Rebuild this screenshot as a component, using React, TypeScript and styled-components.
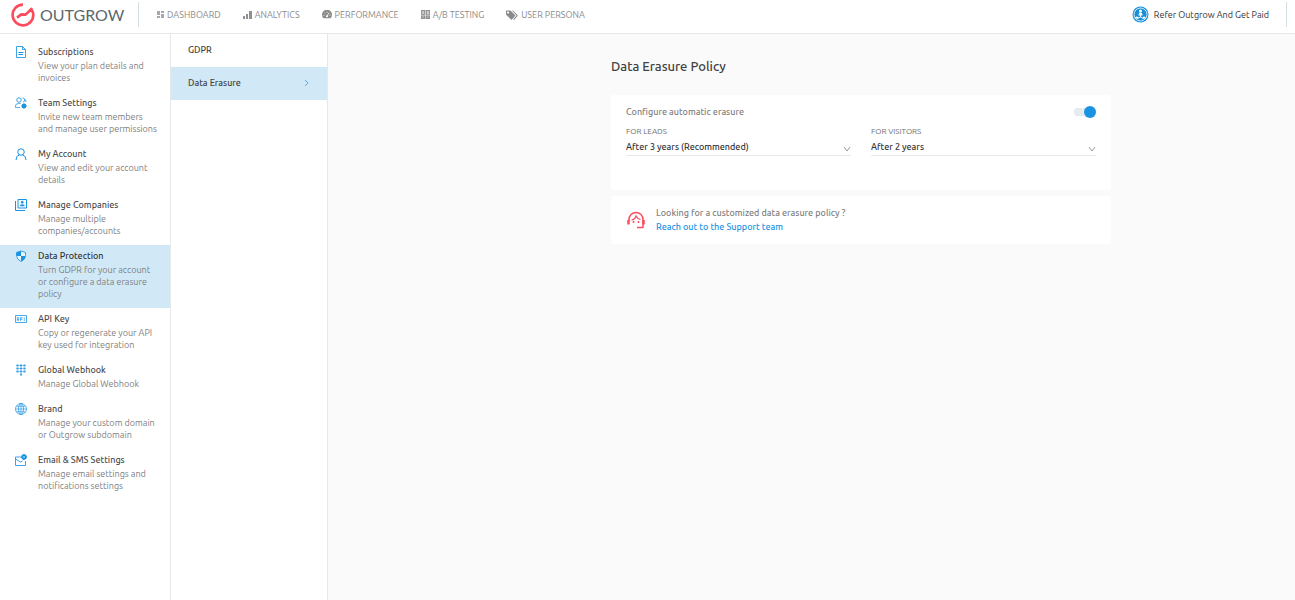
import React from "react";
import styled, { createGlobalStyle } from "styled-components";

const GlobalStyle = createGlobalStyle`
  *, *::before, *::after { box-sizing: border-box; }
  body {
    margin: 0;
    background: #fafafa;
    font-family: Ubuntu, "Noto Sans", "Open Sans", sans-serif;
    font-size: 9px;
    color: #424242;
  }
  h1, p { margin: 0; padding: 0; }
  a { color: inherit; text-decoration: none; }
`;

const BLUE = "#1a93e3";
const LINE = "#e6e8ea";

const Page = styled.div`
  display: flex;
  flex-direction: column;
  min-height: 100vh;
`;

const Header = styled.header`
  display: flex;
  align-items: center;
  height: 34px;
  padding: 0 8px 4px 11px;
  background: #fff;
  border-bottom: 1px solid ${LINE};
`;

const Logo = styled.a`
  display: flex;
  align-items: center;
  gap: 5px;
  width: 127px;
  font-family: Lato, sans-serif;
  font-size: 16px;
  line-height: 24px;
  color: #5b686d;
`;

const Divider = styled.span`
  width: 1px;
  height: 25px;
  background: #d5dfe3;
`;

const Nav = styled.nav`
  display: flex;
  gap: 22px;
  margin-left: 18px;
`;

const Spacer = styled.div`
  flex: 1;
`;

const NavLink = styled.a`
  display: flex;
  align-items: center;
  gap: 3px;
  font-size: 9px;
  line-height: 12px;
  color: #8a8a8a;
`;

const ReferLink = styled.a`
  display: flex;
  align-items: center;
  gap: 5px;
  margin-right: 17px;
  font-size: 9px;
  line-height: 12px;
  color: #333;
`;

const Body = styled.div`
  display: flex;
  flex: 1;
`;

const Sidebar = styled.nav`
  width: 171px;
  padding-top: 7px;
  background: #fff;
  border-right: 1px solid ${LINE};
`;

const SideLink = styled.a<{ $active?: boolean }>`
  display: flex;
  gap: 10px;
  padding: 5px 12px 8px 15px;
  background: ${(p) => (p.$active ? "#d1e9f7" : "transparent")};
  color: ${(p) => (p.$active ? "#333" : "#4d4d4d")};
`;

const SideTitle = styled.div`
  margin-bottom: 1px;
  font-size: 9px;
  line-height: 13px;
  font-weight: 500;
`;

const SideText = styled.p`
  font-size: 9px;
  line-height: 12px;
  color: #808080;
`;

const IconSlot = styled.span`
  flex: none;
  display: flex;
  align-items: flex-start;
  width: 13px;
  color: ${BLUE};
`;

const SubNav = styled.nav`
  width: 157px;
  background: #fff;
  border-right: 1px solid ${LINE};
`;

const SubLink = styled.a<{ $active?: boolean }>`
  display: flex;
  align-items: center;
  justify-content: space-between;
  height: 33px;
  padding: 0 17px 2px;
  font-size: 9px;
  font-weight: 500;
  background: ${(p) => (p.$active ? "#d1e9f7" : "transparent")};
`;

const Main = styled.main`
  flex: 1;
  padding: 22px 0 22px 99px;
`;

const Content = styled.div`
  display: flex;
  flex-direction: column;
  gap: 6px;
  max-width: 500px;
  margin: 0 auto;
`;

const Title = styled.h1`
  margin-bottom: 13px;
  font-size: 13px;
  line-height: 20px;
  font-weight: 500;
`;

const Card = styled.section`
  padding: 10px 15px;
  background: #fff;
  border-radius: 3px;
`;

const PolicyCard = styled(Card)`
  padding-bottom: 34px;
`;

const ToggleRow = styled.label`
  display: flex;
  align-items: center;
  justify-content: space-between;
  font-size: 9px;
  line-height: 14px;
  font-weight: 500;
  color: #808080;
`;

const Toggle = styled.input`
  appearance: none;
  display: flex;
  align-items: center;
  width: 22px;
  height: 12px;
  margin: 0;
  cursor: pointer;
  background: linear-gradient(#e6ebef, #e6ebef) center / 100% 8px no-repeat;
  border-radius: 6px;

  &::before {
    content: "";
    width: 12px;
    height: 12px;
    border-radius: 50%;
    background: #b5bcc2;
  }
  &:checked::before {
    margin-left: auto;
    background: ${BLUE};
  }
`;

const Fields = styled.div`
  display: grid;
  grid-template-columns: 1fr 1fr;
  gap: 20px;
  margin-top: 7px;
`;

const FieldLabel = styled.label`
  display: block;
  font-size: 8px;
  line-height: 12px;
  color: #6e6e6e;
`;

const SelectBox = styled.div`
  display: grid;
  align-items: center;
  border-bottom: 1px solid ${LINE};

  > * {
    grid-area: 1 / 1;
  }
  svg {
    justify-self: end;
    margin-top: 5px;
    pointer-events: none;
  }
`;

const Select = styled.select`
  appearance: none;
  width: 100%;
  height: 17px;
  padding: 2px 12px 0 0;
  border: 0;
  background: transparent;
  font: 500 9px/15px Ubuntu, "Noto Sans", "Open Sans", sans-serif;
  color: #333;
`;

const SupportCard = styled(Card)`
  display: flex;
  align-items: center;
  gap: 10px;
  font-size: 9px;
  line-height: 14px;
  font-weight: 500;
  color: #808080;
`;

const SupportLink = styled.a`
  color: ${BLUE};
`;

type IconProps = { size?: number; children: React.ReactNode };

const Icon = ({ size = 12, children }: IconProps) => (
  <svg
    width={size}
    height={size}
    viewBox="0 0 24 24"
    fill="none"
    stroke="currentColor"
    strokeWidth="2"
    aria-hidden="true"
  >
    {children}
  </svg>
);

const LogoMark = () => (
  <svg width="24" height="24" viewBox="0 0 72 72" fill="none" stroke="#fb4c5d" strokeWidth="8" strokeLinejoin="round" aria-hidden="true">
    <path d="M36 5A31 31 0 1 0 66 29L61 18L44 35L31 34L18 44" />
  </svg>
);

const DashboardIcon = () => (
  <svg width="7" height="8" viewBox="0 0 7 8" fill="#a3a9ad" aria-hidden="true">
    <path d="M0 0h3v4H0zM0 5h3v2H0zM4 0h3v2H4zM4 3h3v4H4z" />
  </svg>
);

const AnalyticsIcon = () => (
  <svg width="9" height="9" viewBox="0 0 9 9" fill="#909090" aria-hidden="true">
    <path d="M0 6h2v3H0zM3 4h2v5H3zM6 1h3v8H6z" />
  </svg>
);

const PerformanceIcon = () => (
  <svg width="10" height="9" viewBox="0 0 20 17" fill="#8a8a8a" aria-hidden="true">
    <path d="M3 16a10 10 0 1 1 14 0z" />
    <path d="M10 12L14 5M3 10h2M5 5l1 1M10 3v2M15 10h2" stroke="#fff" strokeWidth="1.6" />
    <circle cx="10" cy="12" r="2" fill="#fff" />
  </svg>
);

const TestingIcon = () => (
  <svg width="9" height="9" viewBox="0 0 18 18" fill="#909090" aria-hidden="true">
    <path d="M0 0h8.500v18H0zM9.500 0H18v18H9.500z" />
    <path d="M2.500 8V3h3v5M2.500 6h3M12.500 3h3v5h-3zM12.500 5.500h3M0 10.500h18M2 14h4M12 14h4" stroke="#fff" strokeWidth="1" fill="none" />
  </svg>
);

const PersonaIcon = () => (
  <svg width="12" height="10" viewBox="0 0 24 20" fill="#8a8a8a" aria-hidden="true">
    <path fillRule="evenodd" d="M0 2Q0 1 1 1h8l9 9q1 1 0 2l-6 7q-1 1-2 0L0 9zM4 3a2 2 0 1 0 .1 0z" />
    <path d="M12 1h2l9 9q1 1 0 2l-6 7q-1 1-2 0l-.5-.5L21 11z" />
  </svg>
);

const ReferIcon = () => (
  <svg width="17" height="17" viewBox="0 0 34 34" aria-hidden="true">
    <circle cx="17" cy="17" r="16" fill="#178fd6" />
    <circle cx="17" cy="17" r="13" fill="none" stroke="#fff" strokeWidth="1.600" />
    <g fill="#fff">
      <circle cx="17" cy="10" r="3" />
      <path d="M13 19q0-6 4-6t4 6z" />
      <path d="M6 25q0-4 4-4t3 4zM21 25q0-4 3-4t4 4z" />
    </g>
    <path d="M17 17v5M17 22l-6 3M17 22l6 3" stroke="#fff" strokeWidth="1.800" />
  </svg>
);

const SubscriptionIcon = () => (
  <Icon>
    <path d="M3 1h12l6 6v16H3zM15 1v6h6" strokeWidth="1.700" />
    <path d="M7 13h10M7 17h9" />
  </Icon>
);

const TeamIcon = () => (
  <Icon>
    <circle cx="8" cy="6" r="4.500" strokeWidth="1.700" />
    <path d="M1 21v-3q0-5 6-5h4M1 21h9M15 2a4 4 0 0 1 1 8M18 5a3 3 0 0 1 3 5" strokeWidth="1.500" />
    <circle cx="18" cy="18" r="4" fill="currentColor" />
    <path d="M18 13v10M13 18h10M14.500 14.500l7 7M21.500 14.500l-7 7" />
  </Icon>
);

const AccountIcon = () => (
  <Icon>
    <circle cx="12" cy="8" r="6.500" />
    <path d="M2 24q0-9 7-10M22 24q0-9-7-10" />
  </Icon>
);

const CompaniesIcon = () => (
  <Icon>
    <path d="M6 1h17v17H6zM1 4v19h19" />
    <circle cx="14.500" cy="6.500" r="2" fill="currentColor" />
    <path d="M10 14q0-3 4.500-3t4.500 3z" fill="currentColor" strokeWidth="1" />
  </Icon>
);

const ShieldIcon = () => (
  <Icon>
    <path d="M12 2l9 3v6q0 8-9 12q-9-4-9-12V5z" fill="#e8f6fd" strokeWidth="1.700" />
    <path d="M12 2v10H3V5zM12 12h9q-1 8-9 11z" fill="currentColor" stroke="none" />
  </Icon>
);

const ApiIcon = () => (
  <Icon>
    <path d="M1 5h22v14H1z" strokeWidth="1.600" />
    <path d="M4.500 16V9h3v7M4.500 13h3M11 16V9h3v4h-3M18.500 8.500v8" strokeWidth="1.300" />
  </Icon>
);

const WebhookIcon = () => (
  <Icon>
    <path d="M5 1v16M12 1v16M19 1v16M12 19v4" strokeWidth="4" strokeDasharray="4 2" opacity=".85" />
    <path d="M3 3h18M3 9h18M3 15h18" strokeWidth="1.500" opacity=".6" />
  </Icon>
);

const GlobeIcon = () => (
  <Icon>
    <circle cx="12" cy="12" r="11" strokeWidth="1.400" />
    <ellipse cx="12" cy="12" rx="5" ry="11" strokeWidth="1.400" />
    <path d="M12 1v22M1 12h22M3 6.500h18M3 17.500h18" strokeWidth="1.300" />
  </Icon>
);

const MailIcon = () => (
  <Icon>
    <path d="M12 6H1v17h20v-9M1 10l10 6 4-2" strokeWidth="1.700" />
    <circle cx="18" cy="6" r="3.500" strokeWidth="4" />
    <path d="M18 0v3M18 9v3M12 6h3M21 6h3M14 2l2 2M20 8l2 2M22 2l-2 2M16 8l-2 2" />
  </Icon>
);

const SupportIcon = () => (
  <svg width="20" height="20" viewBox="0 0 40 40" fill="none" stroke="#fb4c5d" strokeWidth="3" aria-hidden="true">
    <path d="M6 22v-3a14 14 0 0 1 28 0v15q0 1-1 1H22" />
    <path d="M5 20v9M35 20v9" strokeWidth="5" />
    <path d="M11 20q7-1 9-8q3 6 9 7" strokeWidth="2.500" />
    <path d="M15 22v4M25 22v4" strokeWidth="3" />
  </svg>
);

const Chevron = () => (
  <svg width="8" height="6" viewBox="0 0 8 6" fill="none" stroke="#999" aria-hidden="true">
    <path d="M1 1l3 4 3-4" />
  </svg>
);

const NAV = [
  { label: "DASHBOARD", icon: <DashboardIcon /> },
  { label: "ANALYTICS", icon: <AnalyticsIcon /> },
  { label: "PERFORMANCE", icon: <PerformanceIcon /> },
  { label: "A/B TESTING", icon: <TestingIcon /> },
  { label: "USER PERSONA", icon: <PersonaIcon /> },
];

const SETTINGS = [
  { title: "Subscriptions", text: "View your plan details and invoices", icon: <SubscriptionIcon /> },
  { title: "Team Settings", text: "Invite new team members and manage user permissions", icon: <TeamIcon /> },
  { title: "My Account", text: "View and edit your account details", icon: <AccountIcon /> },
  { title: "Manage Companies", text: "Manage multiple companies/accounts", icon: <CompaniesIcon /> },
  {
    title: "Data Protection",
    text: "Turn GDPR for your account or configure a data erasure policy",
    icon: <ShieldIcon />,
    active: true,
  },
  { title: "API Key", text: "Copy or regenerate your API key used for integration", icon: <ApiIcon /> },
  { title: "Global Webhook", text: "Manage Global Webhook", icon: <WebhookIcon /> },
  { title: "Brand", text: "Manage your custom domain or Outgrow subdomain", icon: <GlobeIcon /> },
  { title: "Email & SMS Settings", text: "Manage email settings and notifications settings", icon: <MailIcon /> },
];

type FieldProps = { id: string; label: string; value: string; options: string[] };

const SelectField = ({ id, label, value, options }: FieldProps) => (
  <div>
    <FieldLabel htmlFor={id}>{label}</FieldLabel>
    <SelectBox>
      <Select id={id} defaultValue={value}>
        {options.map((o) => (
          <option key={o}>{o}</option>
        ))}
      </Select>
      <Chevron />
    </SelectBox>
  </div>
);

export default function App() {
  return (
    <Page>
      <GlobalStyle />
      <Header>
        <Logo href="#">
          <LogoMark />
          OUTGROW
        </Logo>
        <Divider />
        <Nav aria-label="Main">
          {NAV.map((n) => (
            <NavLink key={n.label} href="#">
              {n.icon}
              {n.label}
            </NavLink>
          ))}
        </Nav>
        <Spacer />
        <ReferLink href="#">
          <ReferIcon />
          Refer Outgrow And Get Paid
        </ReferLink>
        <Divider />
      </Header>
      <Body>
        <Sidebar aria-label="Settings">
          {SETTINGS.map((s) => (
            <SideLink key={s.title} href="#" $active={s.active}>
              <IconSlot>{s.icon}</IconSlot>
              <div>
                <SideTitle>{s.title}</SideTitle>
                <SideText>{s.text}</SideText>
              </div>
            </SideLink>
          ))}
        </Sidebar>
        <SubNav aria-label="Data protection">
          <SubLink href="#">GDPR</SubLink>
          <SubLink href="#" $active>
            Data Erasure
            <svg width="6" height="8" viewBox="0 0 6 8" fill="none" stroke="#4fb0ec" aria-hidden="true">
              <path d="M1 1l3 3-3 3" />
            </svg>
          </SubLink>
        </SubNav>
        <Main>
          <Content>
            <Title>Data Erasure Policy</Title>
            <PolicyCard>
              <ToggleRow>
                Configure automatic erasure
                <Toggle type="checkbox" defaultChecked />
              </ToggleRow>
              <Fields>
                <SelectField
                  id="leads"
                  label="FOR LEADS"
                  value="After 3 years (Recommended)"
                  options={["After 1 year", "After 2 years", "After 3 years (Recommended)"]}
                />
                <SelectField
                  id="visitors"
                  label="FOR VISITORS"
                  value="After 2 years"
                  options={["After 1 year", "After 2 years", "After 3 years"]}
                />
              </Fields>
            </PolicyCard>
            <SupportCard>
              <SupportIcon />
              <div>
                <p>Looking for a customized data erasure policy ?</p>
                <SupportLink href="#">Reach out to the Support team</SupportLink>
              </div>
            </SupportCard>
          </Content>
        </Main>
      </Body>
    </Page>
  );
}
